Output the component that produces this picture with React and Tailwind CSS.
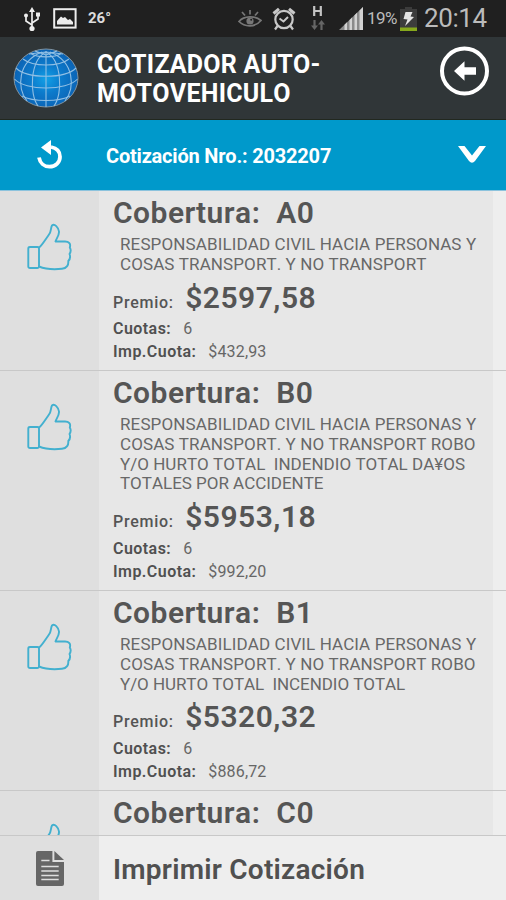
const quotes = [
  {
    code: 'A0',
    height: 'h-[180px]',
    lines: [
      { text: 'RESPONSABILIDAD CIVIL HACIA PERSONAS Y', tracking: 'tracking-[0.12px]' },
      { text: 'COSAS TRANSPORT. Y NO TRANSPORT', tracking: 'tracking-[0.1px]' },
    ],
    premio: '$2597,58',
    cuota: '$432,93',
  },
  {
    code: 'B0',
    height: 'h-[220px]',
    lines: [
      { text: 'RESPONSABILIDAD CIVIL HACIA PERSONAS Y', tracking: 'tracking-[0.12px]' },
      { text: 'COSAS TRANSPORT. Y NO TRANSPORT ROBO', tracking: 'tracking-[0.1px]' },
      { text: 'Y/O HURTO TOTAL  INDENDIO TOTAL DA¥OS', tracking: 'tracking-[0.02px]' },
      { text: 'TOTALES POR ACCIDENTE', tracking: 'tracking-[-0.02px]' },
    ],
    premio: '$5953,18',
    cuota: '$992,20',
  },
  {
    code: 'B1',
    height: 'h-[200px]',
    lines: [
      { text: 'RESPONSABILIDAD CIVIL HACIA PERSONAS Y', tracking: 'tracking-[0.12px]' },
      { text: 'COSAS TRANSPORT. Y NO TRANSPORT ROBO', tracking: 'tracking-[0.1px]' },
      { text: 'Y/O HURTO TOTAL  INCENDIO TOTAL', tracking: 'tracking-[-0.06px]' },
    ],
    premio: '$5320,32',
    cuota: '$886,72',
  },
  { code: 'C0', height: 'h-[180px]', lines: [], premio: '', cuota: '' },
];

function UsbIcon() {
  return (
    <svg width="18" height="26" viewBox="0 0 18 26" fill="none" stroke="#eee" strokeWidth="1.7">
      <path d="M9 4V22M9 19L3 15V10M9 17L15 13V9" />
      <path d="M9 1L12 6H6Z" fill="#eee" stroke="none" />
      <circle cx="9" cy="22.5" r="2.6" fill="#eee" stroke="none" />
      <circle cx="3" cy="9.5" r="2" fill="#eee" stroke="none" />
      <path d="M13 6.5h4v4h-4z" fill="#eee" stroke="none" />
    </svg>
  );
}

function PictureIcon() {
  return (
    <svg width="24" height="21" viewBox="0 0 24 21">
      <rect x="1.2" y="1.2" width="21.4" height="18.4" fill="none" stroke="#eee" strokeWidth="2" />
      <path d="M4 16.500V13L8 8.500L10 10L12 9L15 12L17 11L20 14V16.500Z" fill="#eee" />
    </svg>
  );
}

function EyeIcon() {
  return (
    <svg width="24" height="20" viewBox="0 0 24 20" fill="none" stroke="#777" strokeWidth="1.7">
      <path d="M1 12.500C6 6.500 17 6.500 23 11.500C17 18.500 7 18.500 1 12.500Z" />
      <circle cx="12" cy="12" r="3.6" fill="#777" stroke="none" />
      <path d="M12 1V5.500M4 3L7 6.500M20 3L17 6.500" />
      <circle cx="13.200" cy="10.800" r="1" fill="#222" stroke="none" />
    </svg>
  );
}

function AlarmIcon() {
  return (
    <svg width="24" height="24" viewBox="0 0 24 24" fill="none" stroke="#c8c8c8" strokeWidth="2.200">
      <circle cx="12" cy="12.500" r="8.700" />
      <path d="M7.500 11.500L11.500 14.500L16 10" strokeWidth="2" />
      <path d="M1.500 6.500L7 1.800M22.500 6.500L17 1.800" strokeWidth="3" />
      <path d="M5.500 19L3 22.500M18.500 19L21 22.500" />
    </svg>
  );
}

function DataIcon() {
  return (
    <svg width="16" height="26" viewBox="0 0 16 26" fill="none">
      <path d="M4.200 0V10M10.800 0V10M4.200 5H10.800" stroke="#c4c4c4" strokeWidth="2.200" />
      <path d="M4.500 14V20M11.500 17V24" stroke="#666" strokeWidth="2.200" />
      <path d="M1 19.500H8L4.500 24ZM8 18.500H15L11.500 14Z" fill="#666" />
    </svg>
  );
}

function SignalIcon() {
  return (
    <svg width="25" height="23" viewBox="0 0 25 23">
      <path d="M0 23L24 0V23Z" fill="#8a8a8a" />
      <path d="M5.500 23V17.700L8 15.300V23ZM10.500 23V13L13 10.500V23ZM15.500 23V8.200L18 5.800V23ZM20.500 23V3.400L24 0V23Z" fill="#d2d2d2" />
    </svg>
  );
}

function BatteryIcon() {
  return (
    <svg width="17" height="24" viewBox="0 0 17 24">
      <path d="M5 0H12V2H17V24H0V2H5Z" fill="#3c3c3c" />
      <rect y="20.500" width="17" height="3.500" fill="#86a81c" />
      <path d="M5.500 5H12.500L10.500 9.500L14 10L5 19L7.500 12.500L3.500 12Z" fill="#e6e6e6" />
    </svg>
  );
}

function Globe() {
  return (
    <svg width="66" height="60" viewBox="0 0 66 60">
      <defs>
        <radialGradient id="sea" cx="50%" cy="52%" r="55%">
          <stop offset="0" stopColor="#12a0e6" />
          <stop offset="0.450" stopColor="#0c7acb" />
          <stop offset="1" stopColor="#0b60b2" />
        </radialGradient>
      </defs>
      <ellipse cx="33" cy="30" rx="32" ry="29" fill="url(#sea)" stroke="#8093a0" strokeWidth="1" />
      <g fill="none" stroke="#90bfe4" strokeWidth="1.100">
        <path d="M1.500 31C12 43 54 43 64.500 31M3 20C14 31 52 31 63 20M9 48C20 54 46 54 57 48M10 11C20 19 46 19 56 11M18 5.500C24 10 42 10 48 5.500" />
        <path d="M33 3V59M33 4C17 12 16 46 25 58M33 4C49 12 50 46 41 58M29 4C4 14 4 40 14 53M37 4C62 14 62 40 52 53" />
        <path d="M22 3L33 7L44 3M16 6L33 4L50 6" />
      </g>
    </svg>
  );
}

function ThumbIcon() {
  return (
    <svg width="46" height="48" viewBox="0 0 46 48" fill="none" stroke="#43b0cf" strokeWidth="1.900" strokeLinejoin="round" strokeLinecap="round" className="shrink-0">
      <path d="M2.300 25.500Q2.300 24 4 24H11.500Q13 24 13 25.500V43.500Q13 45 11.500 45H4Q2.300 45 2.300 43.500Z" />
      <path d="M13 24.500C16 22.500 20 15.500 23 11.500C25.500 8.500 24.500 5 26 2.500C28.500 0 32.500 4.500 33 8.500C33.400 12.500 30 16 29.500 18.500L39 18.500C43 18.500 45 21 43.800 24.500C45 26.500 44.500 29.500 43.500 31C44.500 33.500 43.800 36.500 42.300 38C42.600 41.500 41 45.500 36 45.800C29 46.500 19 46 13 43.500" />
    </svg>
  );
}

function Field({ label, value }) {
  return (
    <div className="flex h-[23.3px] items-baseline text-[16px] leading-[23.3px]">
      <span className="font-semibold tracking-[0.45px] text-[#505050]">{label}</span>
      <span className="ml-[12px] tracking-[0.15px] text-[#666]">{value}</span>
    </div>
  );
}

function Quote({ quote }) {
  return (
    <section className={`flex shrink-0 border-b border-[#c8c8c8] ${quote.height}`}>
      <div className="flex w-[98.5px] justify-center bg-[#dfdfdf] pt-[32px]">
        <ThumbIcon />
      </div>
      <div className="w-[394.5px] whitespace-pre bg-[#e7e7e7] pl-[14.5px] pt-1 text-[#555]">
        <h2 className="flex h-9 text-[30px] font-semibold leading-9 tracking-[0.5px]">
          <span>Cobertura:</span>
          <span className="ml-4">{quote.code}</span>
        </h2>
        <div className="pl-[7px] pt-[4px] text-[17px] leading-[19.8px] text-[#686868]">
          {quote.lines.map((line) => (
            <p key={line.text} className={line.tracking}>{line.text}</p>
          ))}
        </div>
        {quote.premio && (
          <>
            <div className="mt-[5px] flex h-9 items-baseline text-[16px] leading-9">
              <span className="font-medium tracking-[0.7px]">Premio:</span>
              <span className="ml-[11.5px] text-[30px] font-semibold tracking-[0.5px]">{quote.premio}</span>
            </div>
            <div className="pt-[1.5px]">
              <Field label="Cuotas:" value="6" />
              <Field label="Imp.Cuota:" value={quote.cuota} />
            </div>
          </>
        )}
      </div>
      <div className="flex-1 bg-[#eee]" />
    </section>
  );
}

export default function App() {
  return (
    <main className="flex h-[900px] w-[506px] flex-col overflow-hidden bg-[#eee] font-['Roboto',sans-serif] [font-kerning:none]">
      <div className="flex h-[37px] shrink-0 items-center bg-[#202020] pl-[23px] text-[#bbb]">
        <UsbIcon />
        <span className="ml-3"><PictureIcon /></span>
        <span className="ml-[11px] w-[150px] text-[15px] font-bold text-[#ddd]">26°</span>
        <EyeIcon />
        <span className="ml-[10px]"><AlarmIcon /></span>
        <span className="ml-[14px]"><DataIcon /></span>
        <span className="ml-[13px]"><SignalIcon /></span>
        <span className="ml-[3px] w-[33px] text-[17px] tracking-[-0.5px]">19%</span>
        <BatteryIcon />
        <span className="ml-[7px] text-[26px] tracking-[-0.4px]">20:14</span>
      </div>
      <header className="flex h-[83px] shrink-0 border-b border-[#22281f] bg-[#303638] pl-[13px]">
        <span className="pt-[11px]"><Globe /></span>
        <h1 className="ml-[18px] w-[342px] pt-[13px] text-[25px] font-bold leading-[29px] tracking-[0.25px] text-white">
          COTIZADOR AUTO-<br />MOTOVEHICULO
        </h1>
        <svg width="50" height="50" viewBox="0 0 50 50" className="mt-[9px]" fill="none">
          <circle cx="25.500" cy="25" r="22.500" stroke="#fff" strokeWidth="4" />
          <path d="M15 25L25.500 15.200V21.300H37V28.700H25.500V34.800Z" fill="#fff" />
        </svg>
      </header>
      <div className="flex h-[71px] shrink-0 items-center border-b border-[#8cc3dd] bg-[#0099cb] pl-9">
        <svg width="28" height="32" viewBox="0 0 28 32" fill="none">
          <path d="M3 18.500C4 24 8 27.700 13.500 27.700C19.500 27.700 24 23.500 24 17.700C24 12.500 20.500 9 15 8" stroke="#fff" strokeWidth="3.800" />
          <path d="M15 1V16L5 8.500Z" fill="#fff" />
        </svg>
        <p className="ml-[42px] w-[352px] pt-[2px] text-[20px] font-bold tracking-[-0.2px] text-white">Cotización Nro.: 2032207</p>
        <svg width="28" height="18" viewBox="0 0 28 18">
          <path d="M0 0H6.500L14 9.500L21.500 0H28L17 15Q14 18.500 11 15Z" fill="#fff" />
        </svg>
      </div>
      <div className="flex h-[645px] shrink-0 flex-col overflow-hidden border-b border-[#c8c8c8]">
        {quotes.map((quote) => (
          <Quote key={quote.code} quote={quote} />
        ))}
      </div>
      <footer className="flex flex-1">
        <div className="flex w-[98.5px] items-center justify-center bg-[#dfdfdf]">
          <svg width="28" height="35" viewBox="0 0 29 35" preserveAspectRatio="none" className="ml-0.5">
            <path d="M2 0H17V11H29V33Q29 35 27 35H2Q0 35 0 33V2Q0 0 2 0Z" fill="#666" />
            <path d="M19 0L29 9H19Z" fill="#666" />
            <path d="M5.500 9.500H14M5.500 15.500H23.500M5.500 20H23.500M5.500 24.500H23.500M5.500 28.500H23.500" stroke="#dedede" strokeWidth="1.600" />
          </svg>
        </div>
        <p className="pl-[14.5px] pt-4 text-[28px] font-semibold leading-9 tracking-[0.24px] text-[#505050]">Imprimir Cotización</p>
      </footer>
    </main>
  );
}
